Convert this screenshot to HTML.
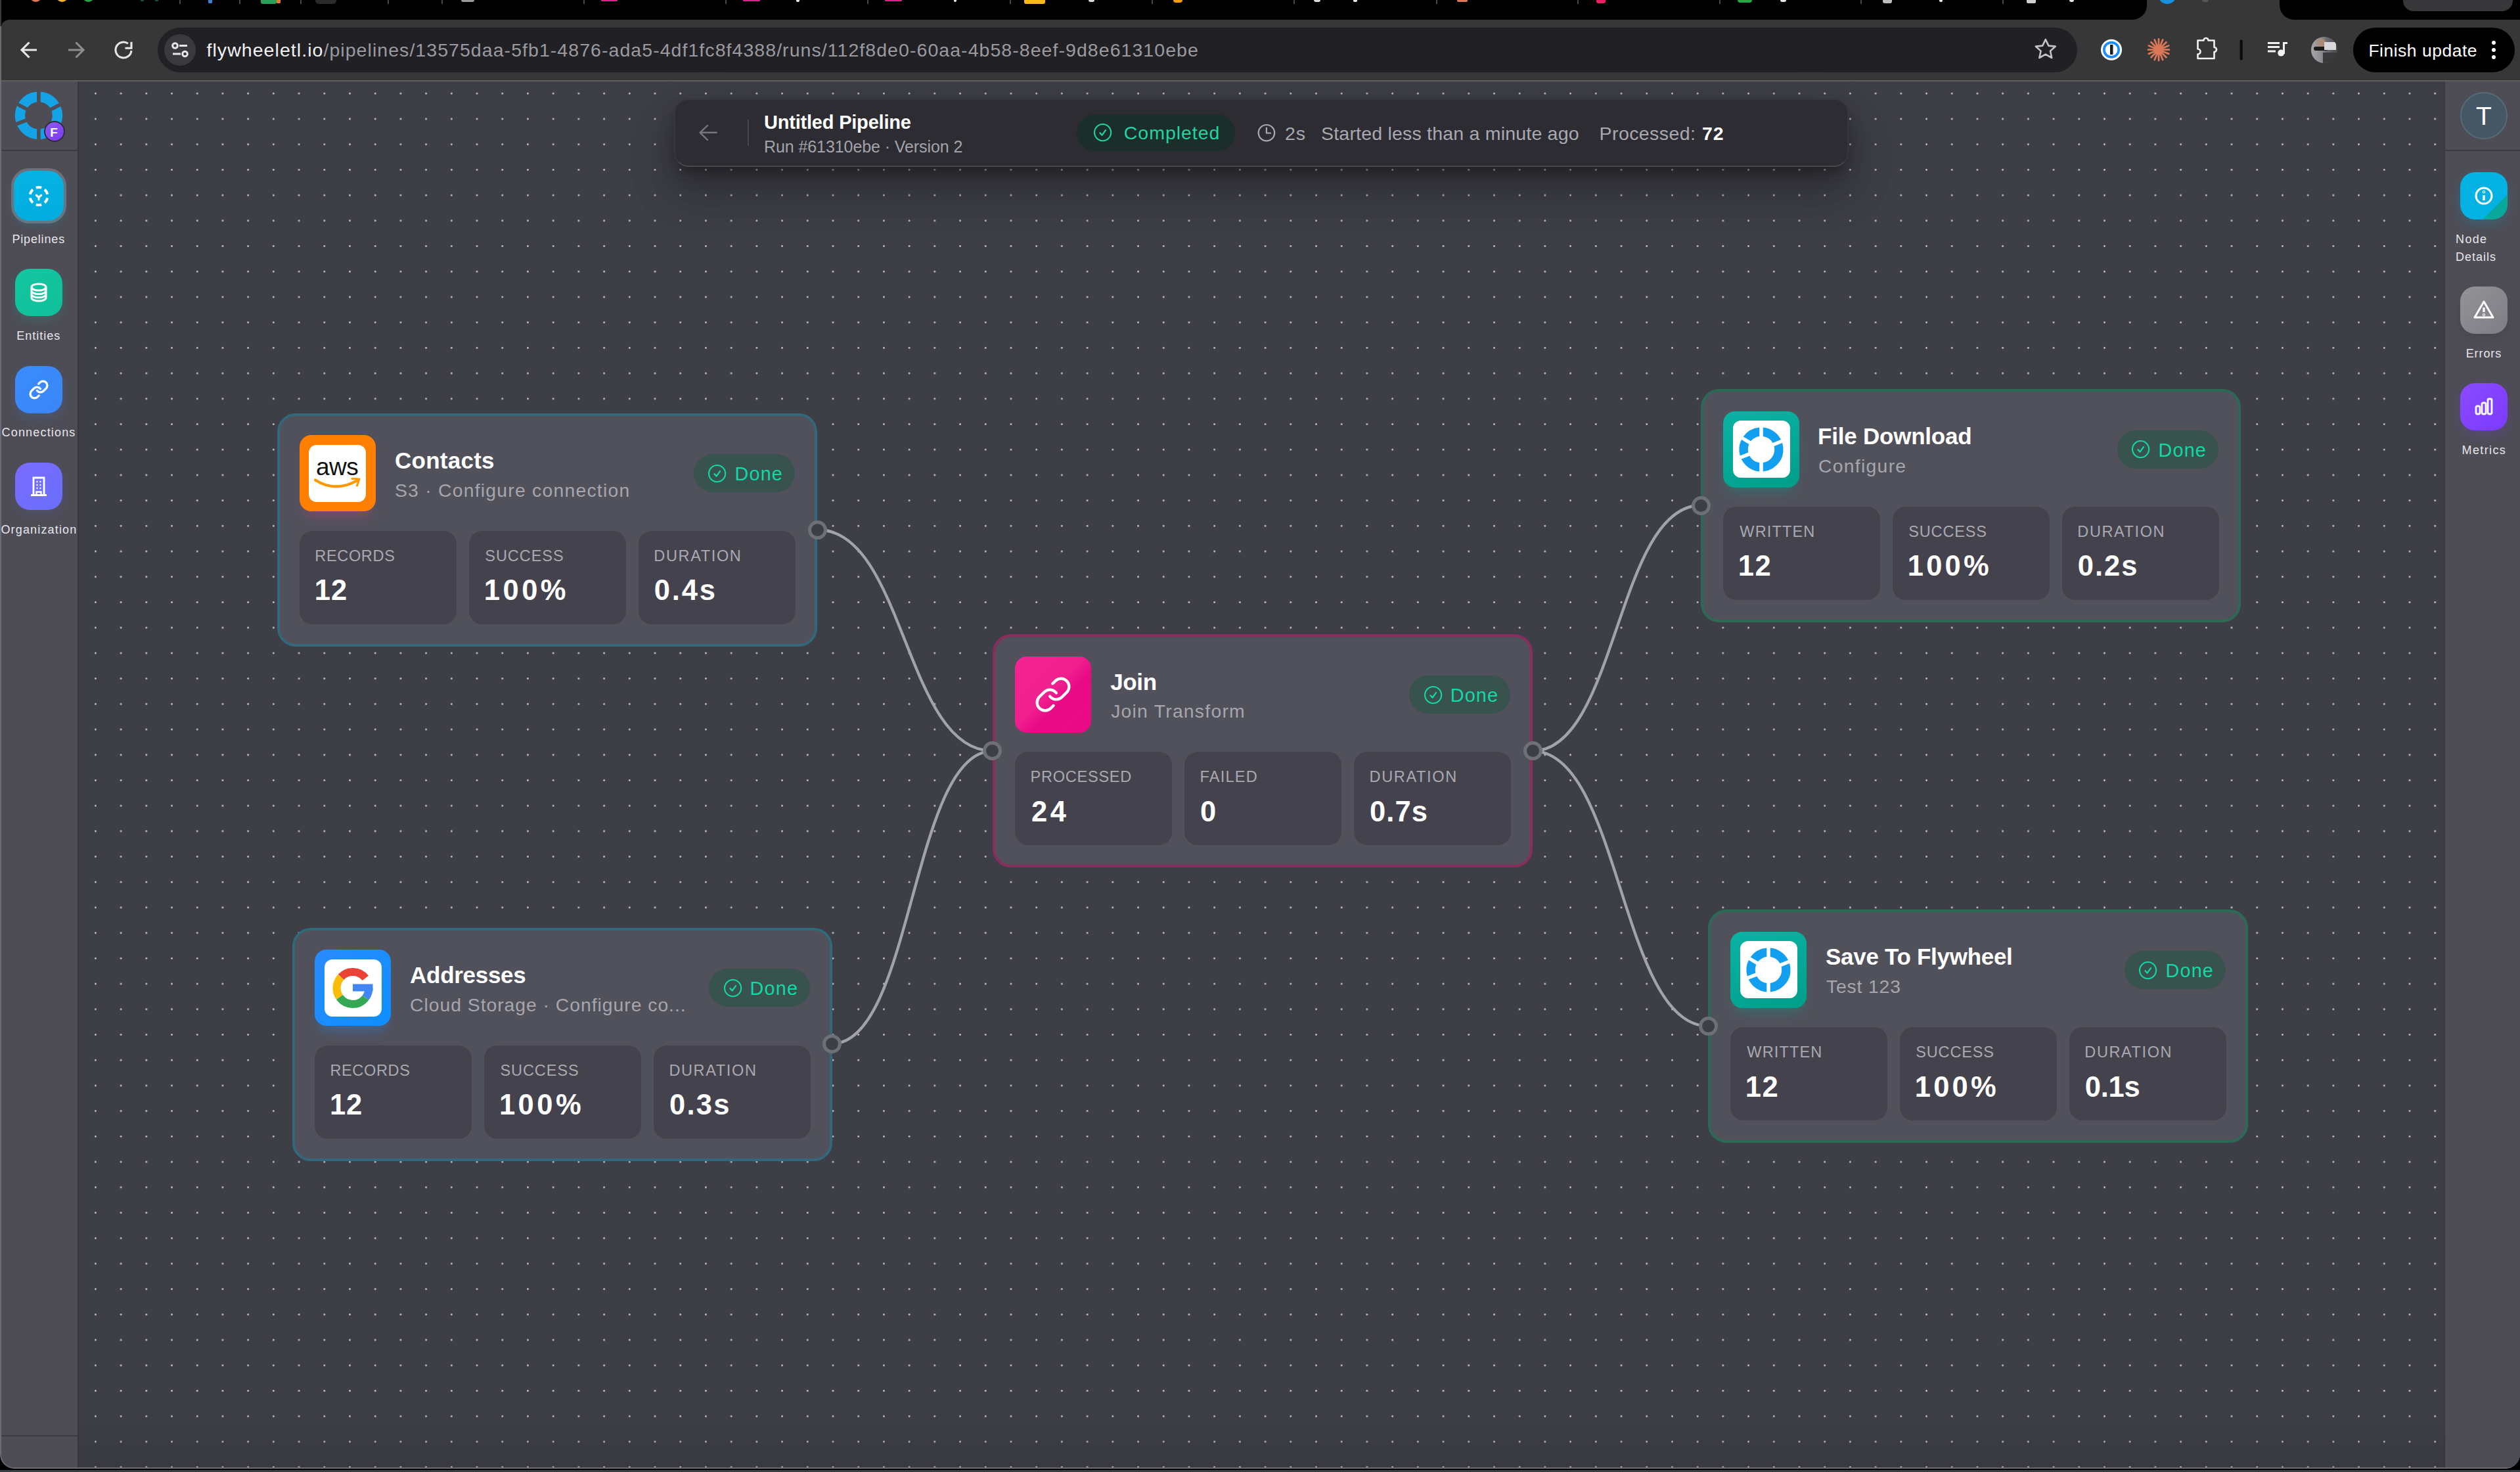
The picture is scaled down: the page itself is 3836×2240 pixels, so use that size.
<!DOCTYPE html><html><head><meta charset="utf-8"><style>
html,body{margin:0;padding:0;}
body{width:3836px;height:2240px;overflow:hidden;background:#000;position:relative;font-family:"Liberation Sans", sans-serif;}
.a{position:absolute;}
.t{position:absolute;white-space:nowrap;font-family:"Liberation Sans", sans-serif;}
</style></head><body>
<div class="a" style="left:0px;top:38px;width:3836px;height:2197px;background:#6c6c72;border-radius:0 0 22px 22px"></div>
<div class="a" style="left:0px;top:0px;width:2px;height:40px;background:#3a3a3c"></div>
<div class="a" style="left:2px;top:0px;width:3834px;height:60px;background:#000"></div>
<div class="a" style="left:46px;top:-14px;width:17px;height:17px;background:#e0795a;border-radius:50%"></div>
<div class="a" style="left:86px;top:-14px;width:17px;height:17px;background:#f5b52e;border-radius:50%"></div>
<div class="a" style="left:126px;top:-14px;width:17px;height:17px;background:#27a644;border-radius:50%"></div>
<div class="a" style="left:214px;top:0px;width:5px;height:2px;background:#1f4f35;border-radius:0 0 1px 1px"></div>
<div class="a" style="left:236px;top:0px;width:5px;height:2px;background:#1f4f35;border-radius:0 0 1px 1px"></div>
<div class="a" style="left:317px;top:0px;width:6px;height:5px;background:#3a7fd7;border-radius:0 0 1px 1px"></div>
<div class="a" style="left:397px;top:0px;width:24px;height:6px;background:#2b9f5a;border-radius:0 0 3px 3px"></div>
<div class="a" style="left:421px;top:0px;width:6px;height:5px;background:#e8782a;border-radius:0 0 1px 1px"></div>
<div class="a" style="left:480px;top:0px;width:32px;height:6px;background:#2a2a2c;border-radius:0 0 5px 5px"></div>
<div class="a" style="left:702px;top:0px;width:20px;height:3px;background:#9a9a9e;border-radius:0 0 8px 8px"></div>
<div class="a" style="left:915px;top:0px;width:25px;height:2px;background:#e0208a;border-radius:0 0 1px 1px"></div>
<div class="a" style="left:1131px;top:0px;width:26px;height:2px;background:#e0208a;border-radius:0 0 1px 1px"></div>
<div class="a" style="left:1212px;top:0px;width:5px;height:3px;background:#e8e8e8;border-radius:0 0 2px 2px"></div>
<div class="a" style="left:1347px;top:0px;width:26px;height:2px;background:#e0208a;border-radius:0 0 1px 1px"></div>
<div class="a" style="left:1452px;top:0px;width:4px;height:3px;background:#e8e8e8;border-radius:0 0 2px 2px"></div>
<div class="a" style="left:1559px;top:0px;width:32px;height:6px;background:#fbb917;border-radius:0 0 3px 3px"></div>
<div class="a" style="left:1657px;top:0px;width:9px;height:3px;background:#dcdcdc;border-radius:0 0 4px 4px"></div>
<div class="a" style="left:1786px;top:0px;width:14px;height:4px;background:#f39c12;border-radius:0 0 7px 7px"></div>
<div class="a" style="left:2000px;top:0px;width:10px;height:3px;background:#dcdcdc;border-radius:0 0 4px 4px"></div>
<div class="a" style="left:2060px;top:0px;width:6px;height:3px;background:#e8e8e8;border-radius:0 0 2px 2px"></div>
<div class="a" style="left:2218px;top:0px;width:16px;height:3px;background:#d97757;border-radius:0 0 2px 2px"></div>
<div class="a" style="left:2430px;top:0px;width:14px;height:5px;background:#e91e63;border-radius:0 0 3px 3px"></div>
<div class="a" style="left:2645px;top:0px;width:22px;height:4px;background:#27a644;border-radius:0 0 10px 10px"></div>
<div class="a" style="left:2710px;top:0px;width:9px;height:3px;background:#e8e8e8;border-radius:0 0 4px 4px"></div>
<div class="a" style="left:2866px;top:0px;width:14px;height:5px;background:#bdbdbd;border-radius:0 0 3px 3px"></div>
<div class="a" style="left:2952px;top:0px;width:5px;height:3px;background:#e8e8e8;border-radius:0 0 2px 2px"></div>
<div class="a" style="left:3085px;top:0px;width:14px;height:5px;background:#cfcfcf;border-radius:0 0 2px 2px"></div>
<div class="a" style="left:3150px;top:0px;width:7px;height:3px;background:#e8e8e8;border-radius:0 0 3px 3px"></div>
<div class="a" style="left:273px;top:0px;width:2px;height:6px;background:#4a4a4a"></div>
<div class="a" style="left:364px;top:0px;width:2px;height:6px;background:#4a4a4a"></div>
<div class="a" style="left:456.5px;top:0px;width:2px;height:6px;background:#4a4a4a"></div>
<div class="a" style="left:589.5px;top:0px;width:2px;height:6px;background:#4a4a4a"></div>
<div class="a" style="left:672.4px;top:0px;width:2px;height:6px;background:#4a4a4a"></div>
<div class="a" style="left:888px;top:0px;width:2px;height:6px;background:#4a4a4a"></div>
<div class="a" style="left:1104px;top:0px;width:2px;height:6px;background:#4a4a4a"></div>
<div class="a" style="left:1320px;top:0px;width:2px;height:6px;background:#4a4a4a"></div>
<div class="a" style="left:1537px;top:0px;width:2px;height:6px;background:#4a4a4a"></div>
<div class="a" style="left:1753px;top:0px;width:2px;height:6px;background:#4a4a4a"></div>
<div class="a" style="left:1969px;top:0px;width:2px;height:6px;background:#4a4a4a"></div>
<div class="a" style="left:2185.5px;top:0px;width:2px;height:6px;background:#4a4a4a"></div>
<div class="a" style="left:2401px;top:0px;width:2px;height:6px;background:#4a4a4a"></div>
<div class="a" style="left:2617px;top:0px;width:2px;height:6px;background:#4a4a4a"></div>
<div class="a" style="left:2832px;top:0px;width:2px;height:6px;background:#4a4a4a"></div>
<div class="a" style="left:3047.6px;top:0px;width:2px;height:6px;background:#4a4a4a"></div>
<div class="a" style="left:3240px;top:0px;width:260px;height:32px;background:#373737"></div>
<div class="a" style="left:3200px;top:0px;width:68px;height:30px;background:#000;border-radius:0 0 22px 0"></div>
<div class="a" style="left:3470px;top:0px;width:366px;height:30px;background:#000;border-radius:0 0 0 22px"></div>
<div class="a" style="left:3285px;top:-22px;width:28px;height:28px;background:#1a8fe0;border-radius:50%"></div>
<div class="a" style="left:3352px;top:0px;width:10px;height:3px;background:#555;border-radius:0 0 3px 3px"></div>
<div class="a" style="left:3658px;top:0px;width:167px;height:17px;background:#373739;border-radius:0 0 16px 16px"></div>
<div class="a" style="left:2px;top:29.5px;width:3834px;height:92.5px;background:#373737;border-radius:12px 0 0 0"></div>
<div class="a" style="left:2px;top:122px;width:3834px;height:2px;background:#5d5d63"></div>
<div class="a" style="left:240px;top:42px;width:2922px;height:68px;background:#212125;border-radius:34px"></div>
<div class="a" style="left:250px;top:52px;width:48px;height:48px;background:#3a3a3e;border-radius:50%"></div>
<svg class="a" style="left:0;top:30px" width="240" height="92" viewBox="0 30 240 92">
<g fill="none" stroke="#e8e8ea" stroke-width="3.1" stroke-linecap="butt" stroke-linejoin="miter">
<path d="M33 76 H56 M44.5 64.5 L33 76 L44.5 87.5"/>
</g>
<g fill="none" stroke="#8d8d8f" stroke-width="3.1" stroke-linecap="butt">
<path d="M104 76 H127 M115.5 64.5 L127 76 L115.5 87.5"/>
</g>
<g fill="none" stroke="#e8e8ea" stroke-width="3.1">
<path d="M199.95 77.05 A12 12 0 1 1 194.9 66.2"/>
<path d="M190.5 73.3 H200 V63.8"/>
</g>
</svg>
<svg class="a" style="left:250px;top:52px" width="48" height="48" viewBox="250 52 48 48">
<g fill="none" stroke="#e8e8ea" stroke-width="3">
<circle cx="266.5" cy="69.5" r="3.8"/><path d="M273 69.5 H285"/>
<circle cx="281.5" cy="82" r="3.8"/><path d="M263 82 H275"/>
</g></svg>
<div id="t0" class="t" style="left:314.5px;top:62.4px;font-size:28.5px;line-height:28.5px;color:#f2f2f4;font-weight:400;letter-spacing:1.054px;">flywheeletl.io<span style="color:#9a9aa0">/pipelines/13575daa-5fb1-4876-ada5-4df1fc8f4388/runs/112f8de0-60aa-4b58-8eef-9d8e61310ebe</span></div>
<svg class="a" style="left:3080px;top:40px" width="420" height="72" viewBox="3080 40 420 72">
<path d="M3113.8 60 L3118.4 69.6 L3128.8 70.6 L3121 77.6 L3123.2 88 L3113.8 82.6 L3104.4 88 L3106.6 77.6 L3098.8 70.6 L3109.2 69.6 Z" fill="none" stroke="#c4c4c8" stroke-width="2.6" stroke-linejoin="round"/>
<circle cx="3214" cy="75.7" r="16" fill="#fff"/><circle cx="3214" cy="75.7" r="13" fill="#1a8cff"/><circle cx="3214" cy="75.7" r="9.3" fill="#fff"/>
<rect x="3212" y="68" width="4.5" height="15" fill="#1c1c1c"/>
<g stroke="#d97757" stroke-width="2.8" stroke-linecap="round">
<path d="M3286 59.5 V92 M3270 75.7 H3302 M3274.5 64.2 L3297.5 87.2 M3274.5 87.2 L3297.5 64.2 M3279.8 60.5 L3292.2 91 M3292.2 60.5 L3279.8 91 M3270.8 69.5 L3301.2 81.9 M3270.8 81.9 L3301.2 69.5"/>
</g>
<circle cx="3286" cy="75.7" r="4" fill="#d97757"/>
<path d="M3345.5 68 V61.5 H3354.5 A3.5 3.5 0 0 1 3361.5 61.5 H3370.5 V72 A3.5 3.5 0 0 1 3370.5 79 V89 H3345.5 V82.5 A4 4 0 0 0 3345.5 74.5 Z" fill="none" stroke="#f2f2f2" stroke-width="2.6" stroke-linejoin="round"/>
<rect x="3409.6" y="60.6" width="4.2" height="31" rx="2.1" fill="#0b0b0b"/>
<g fill="#f2f2f2"><rect x="3452" y="64" width="18" height="3"/><rect x="3452" y="70" width="18" height="3"/><rect x="3452" y="76.5" width="12" height="3"/>
<rect x="3475" y="64" width="3" height="18"/><rect x="3475" y="64" width="7" height="3"/><circle cx="3472.2" cy="80.6" r="5"/></g>
</svg>
<div class="a" style="left:3518px;top:55.7px;width:40px;height:40px;border-radius:50%;overflow:hidden;background:linear-gradient(90deg,#a8a8ac 0%,#8c8c90 40%,#6a6a6e 60%,#4a4a4e 100%)">
<div class="a" style="left:8px;top:3px;width:14px;height:12px;background:#b98a70;border-radius:6px;opacity:.7"></div>
<div class="a" style="left:4px;top:15px;width:22px;height:6px;background:#1b1b1b;border-radius:3px"></div>
<div class="a" style="left:20px;top:8px;width:18px;height:12px;background:#d8d8da"></div>
<div class="a" style="left:18px;top:24px;width:22px;height:16px;background:#3a3a3c"></div>
</div>
<div class="a" style="left:3582px;top:42px;width:246px;height:68px;background:#000;border-radius:34px"></div>
<div id="t1" class="t" style="left:3605.4px;top:63.9px;font-size:26.5px;line-height:26.5px;color:#ffffff;font-weight:400;letter-spacing:0.500px;">Finish update</div>
<div class="a" style="left:3792.7px;top:61.60000000000001px;width:6.6px;height:6.6px;border-radius:50%;background:#fff"></div>
<div class="a" style="left:3792.7px;top:72.7px;width:6.6px;height:6.6px;border-radius:50%;background:#fff"></div>
<div class="a" style="left:3792.7px;top:83.8px;width:6.6px;height:6.6px;border-radius:50%;background:#fff"></div>
<div class="a" style="left:2px;top:124px;width:3834px;height:2109px;background:#3e3e47;border-radius:0 0 20px 20px;overflow:hidden"></div>
<svg class="a" style="left:118px;top:124px" width="3604" height="2109" viewBox="118 124 3604 2109">
<defs><pattern id="dots" patternUnits="userSpaceOnUse" x="126.045" y="122.94500000000001" width="38.71" height="38.71">
<circle cx="19.355" cy="19.355" r="1.4" fill="#c6c6cc"/></pattern></defs>
<rect x="118" y="124" width="3604" height="2109" fill="url(#dots)"/></svg>
<div class="a" style="left:2px;top:124px;width:116px;height:2109px;background:#4e4d56;border-radius:0 0 0 20px"></div>
<div class="a" style="left:118px;top:124px;width:2px;height:2109px;background:#37363f"></div>
<div class="a" style="left:2px;top:228px;width:116px;height:2px;background:#3c3b43"></div>
<div class="a" style="left:2px;top:2184px;width:116px;height:2px;background:#3c3b43"></div>
<div class="a" style="left:3722px;top:124px;width:114px;height:2109px;background:#4e4d56;border-radius:0 0 20px 0"></div>
<div class="a" style="left:3720px;top:124px;width:2px;height:2109px;background:#3a3a42"></div>
<div class="a" style="left:3722px;top:228px;width:114px;height:2px;background:#3c3b43"></div>
<svg class="a" style="left:19px;top:136px" width="80" height="80" viewBox="19 136 80 80">
<path d="M61.70 139.71 A36.2 36.2 0 0 1 89.79 156.92 L76.00 163.96 A20.8 20.8 0 0 0 61.69 155.19 Z M92.33 161.91 A36.2 36.2 0 0 1 61.70 211.89 L61.69 196.41 A20.8 20.8 0 0 0 78.53 168.93 Z M56.10 211.89 A36.2 36.2 0 0 1 26.21 191.35 L40.66 185.79 A20.8 20.8 0 0 0 56.11 196.41 Z M24.20 186.12 A36.2 36.2 0 0 1 25.72 161.33 L39.39 168.59 A20.8 20.8 0 0 0 38.66 180.58 Z M28.35 156.39 A36.2 36.2 0 0 1 56.10 139.71 L56.11 155.19 A20.8 20.8 0 0 0 42.01 163.66 Z" fill="#13a3e6"/>
</svg>
<div class="a" style="left:67px;top:184px;width:28px;height:28px;border-radius:50%;background:linear-gradient(135deg,#8b5cf6,#7c3aed);border:2px solid #2e2d35"></div>
<div id="t2" class="t" style="left:76.3px;top:191.6px;font-size:19px;line-height:19px;color:#ffffff;font-weight:700;letter-spacing:0.000px;">F</div>
<div class="a" style="left:17px;top:255.5px;width:84px;height:84px;background:#707079;border-radius:27px"></div>
<div class="a" style="left:21px;top:259.5px;width:76px;height:76px;border-radius:23.6px;background:linear-gradient(180deg,#05b3e3,#02acdf);box-shadow:0 6px 14px rgba(0,180,220,0.18)"></div><svg class="a" style="left:21px;top:259.5px" width="76" height="76" viewBox="0 0 76 76"><g transform="translate(38,38.5)" fill="none" stroke="#fff" stroke-width="4" stroke-linecap="butt"><path d="M-4.17 -12.84 A13.5 13.5 0 0 1 4.17 -12.84 M9.03 -10.03 A13.5 13.5 0 0 1 13.20 -2.81 M13.20 2.81 A13.5 13.5 0 0 1 9.03 10.03 M4.17 12.84 A13.5 13.5 0 0 1 -4.17 12.84 M-9.03 10.03 A13.5 13.5 0 0 1 -13.20 2.81 M-13.20 -2.81 A13.5 13.5 0 0 1 -9.03 -10.03"/><path d="M-3.8 -1.5 L0 1.8 L3.8 -1.5 M0 1.8 V5.5" stroke-width="3" stroke-linecap="round"/></g></svg>
<div class="a" style="left:23.3px;top:409px;width:72px;height:72px;border-radius:22.3px;background:linear-gradient(135deg,#14c7a1,#0fbf9a);box-shadow:0 8px 16px rgba(20,190,160,0.15)"></div><svg class="a" style="left:23.3px;top:409px" width="72" height="72" viewBox="0 0 72 72"><g transform="translate(36,36)" fill="none" stroke="#fff" stroke-width="3"><ellipse cx="0" cy="-8" rx="11" ry="5"/><path d="M-11 -8 V8 A11 5 0 0 0 11 8 V-8 M-11 -2.5 A11 5 0 0 0 11 -2.5 M-11 2.8 A11 5 0 0 0 11 2.8"/></g></svg>
<div class="a" style="left:23.3px;top:556.5px;width:72px;height:72px;border-radius:22.3px;background:linear-gradient(135deg,#3b8cff,#3a86f7);box-shadow:0 8px 16px rgba(60,140,255,0.15)"></div><svg class="a" style="left:23.3px;top:556.5px" width="72" height="72" viewBox="0 0 72 72"><g transform="translate(36,36) scale(1.3) translate(-12,-12)" fill="none" stroke="#fff" stroke-width="2.5" stroke-linecap="round" stroke-linejoin="round">
<path d="M10 13a5 5 0 0 0 7.54.54l3-3a5 5 0 0 0-7.07-7.07l-1.72 1.71"/><path d="M14 11a5 5 0 0 0-7.54-.54l-3 3a5 5 0 0 0 7.07 7.07l1.71-1.71"/></g></svg>
<div class="a" style="left:23.3px;top:703.8px;width:72px;height:72px;border-radius:22.3px;background:linear-gradient(135deg,#7a6cff,#6a6ffb);box-shadow:0 8px 16px rgba(110,110,255,0.12)"></div><svg class="a" style="left:23.3px;top:703.8px" width="72" height="72" viewBox="0 0 72 72"><g transform="translate(36,36)" fill="none" stroke="#fff" stroke-width="2.8"><path d="M-8 13.5 V-13 H8 V13.5 M-12 13.5 H12"/><path d="M-3.5 -7 H-1.5 M1.5 -7 H3.5 M-3.5 -2 H-1.5 M1.5 -2 H3.5 M-3.5 3 H-1.5 M1.5 3 H3.5" stroke-width="2.4"/><path d="M-3.5 13.5 V8.5 H3.5 V13.5" stroke-width="2.4"/></g></svg>
<div id="t3" class="t" style="left:18.4px;top:355.2px;font-size:18px;line-height:18px;color:#e6e6ea;font-weight:400;letter-spacing:0.838px;">Pipelines</div>
<div id="t4" class="t" style="left:25.3px;top:502.0px;font-size:18px;line-height:18px;color:#e6e6ea;font-weight:400;letter-spacing:1.000px;">Entities</div>
<div id="t5" class="t" style="left:2.6px;top:649.3px;font-size:18px;line-height:18px;color:#e6e6ea;font-weight:400;letter-spacing:1.170px;">Connections</div>
<div id="t6" class="t" style="left:1.4px;top:797.4px;font-size:18px;line-height:18px;color:#e6e6ea;font-weight:400;letter-spacing:1.164px;">Organization</div>
<div class="a" style="left:3745.1px;top:140.0px;width:71.6px;height:71.6px;border-radius:50%;background:#455664;box-shadow:inset 0 0 0 2px #566a78"></div>
<div id="t7" class="t" style="left:3769.0px;top:157.4px;font-size:39px;line-height:39px;color:#ffffff;font-weight:400;letter-spacing:0.000px;">T</div>
<div class="a" style="left:3745px;top:262px;width:72px;height:72px;border-radius:22.3px;background:linear-gradient(135deg,#03b1e2 0%,#03b1e2 74%,#0aa89a 74%,#0aa89a 100%);box-shadow:0 8px 18px rgba(0,170,220,0.2)"></div><svg class="a" style="left:3745px;top:262px" width="72" height="72" viewBox="0 0 72 72"><g transform="translate(36,36)" fill="none" stroke="#fff" stroke-width="3"><circle r="12"/><path d="M0 -1 V7" stroke-width="3.4"/><circle cx="0" cy="-6" r="0.6" stroke-width="3.4"/></g></svg>
<div class="a" style="left:3745px;top:436px;width:72px;height:72px;border-radius:22.3px;background:linear-gradient(135deg,#939398,#7d7d84);box-shadow:0 8px 16px rgba(0,0,0,0.08)"></div><svg class="a" style="left:3745px;top:436px" width="72" height="72" viewBox="0 0 72 72"><g transform="translate(36,36)" fill="none" stroke="#fff" stroke-width="3" stroke-linejoin="round"><path d="M0 -13 L14 11 H-14 Z"/><path d="M0 -4 V3" stroke-width="3.2"/><circle cx="0" cy="7" r="0.5" stroke-width="3.2"/></g></svg>
<div class="a" style="left:3745px;top:583px;width:72px;height:72px;border-radius:22.3px;background:linear-gradient(135deg,#8a4bff,#7c3aff);box-shadow:0 8px 18px rgba(130,60,255,0.18)"></div><svg class="a" style="left:3745px;top:583px" width="72" height="72" viewBox="0 0 72 72"><g transform="translate(36,36)" fill="none" stroke="#fff" stroke-width="2.8"><rect x="-12" y="-1" width="6" height="12" rx="2"/><rect x="-3" y="-6" width="6" height="17" rx="2"/><rect x="6" y="-12" width="6" height="23" rx="2"/></g></svg>
<div id="t8" class="t" style="left:3738.1px;top:355.0px;font-size:18px;line-height:18px;color:#e6e6ea;font-weight:400;letter-spacing:1.333px;">Node</div>
<div id="t9" class="t" style="left:3738.1px;top:381.8px;font-size:18px;line-height:18px;color:#e6e6ea;font-weight:400;letter-spacing:1.000px;">Details</div>
<div id="t10" class="t" style="left:3753.7px;top:528.9px;font-size:18px;line-height:18px;color:#e6e6ea;font-weight:400;letter-spacing:0.920px;">Errors</div>
<div id="t11" class="t" style="left:3747.6px;top:675.9px;font-size:18px;line-height:18px;color:#e6e6ea;font-weight:400;letter-spacing:1.367px;">Metrics</div>
<svg class="a" style="left:0;top:0" width="3836" height="2240" viewBox="0 0 3836 2240">
<g fill="none" stroke="#a2a2ab" stroke-width="4.3">
<path d="M1244.2 806 C1377.45 806 1377.45 1142.8 1510.7 1142.8"/><path d="M1266.7 1588.3 C1388.7 1588.3 1388.7 1142.8 1510.7 1142.8"/><path d="M2333 1142.8 C2461.0 1142.8 2461.0 769 2589 769"/><path d="M2333 1142.8 C2466.5 1142.8 2466.5 1561.5 2600 1561.5"/>
</g></svg>
<div class="a" style="left:1026px;top:149.7px;width:1787.6px;height:104.6px;background:#2c2c32;border:2px solid #36363d;border-bottom-color:#48484f;box-sizing:border-box;border-radius:22px;box-shadow:0 14px 24px -6px rgba(0,0,0,0.35), 0 30px 70px 0px rgba(0,0,0,0.22), 0 40px 60px 20px rgba(0,0,0,0.07)"></div>
<svg class="a" style="left:1060px;top:185px" width="40" height="34" viewBox="1060 185 40 34">
<path d="M1065.5 201.8 H1090.8 M1077 191 L1065.5 201.8 L1077 212.8" fill="none" stroke="#76767e" stroke-width="2.4" stroke-linecap="round" stroke-linejoin="round"/></svg>
<div class="a" style="left:1137.9px;top:182px;width:2px;height:40px;background:#45454c"></div>
<div id="t12" class="t" style="left:1163.0px;top:172.1px;font-size:29px;line-height:29px;color:#ffffff;font-weight:700;letter-spacing:-0.206px;">Untitled Pipeline</div>
<div id="t13" class="t" style="left:1163.0px;top:210.6px;font-size:25px;line-height:25px;color:#a3a3ab;font-weight:400;letter-spacing:-0.083px;">Run #61310ebe · Version 2</div>
<div class="a" style="left:1639px;top:174px;width:240.6px;height:56px;background:#1b2e2a;border-radius:28px"></div>
<svg class="a" style="left:1663.0px;top:186.4px" width="31.2" height="31.2" viewBox="-15.6 -15.6 31.2 31.2"><circle cx="0" cy="0" r="12.6" fill="none" stroke="#22d2a2" stroke-width="2.1"/><path d="M-4.16 0.63 L-1.01 4.03 L4.41 -3.53" fill="none" stroke="#22d2a2" stroke-width="2.3" stroke-linecap="round" stroke-linejoin="round"/></svg>
<div id="t14" class="t" style="left:1710.8px;top:188.4px;font-size:28.5px;line-height:28.5px;color:#22d4a3;font-weight:400;letter-spacing:0.975px;">Completed</div>
<svg class="a" style="left:1910px;top:185px" width="36" height="36" viewBox="1910 185 36 36">
<g fill="none" stroke="#a9a9b1" stroke-width="2.2" stroke-linecap="round"><circle cx="1927.9" cy="202.2" r="12.2"/><path d="M1927.9 194.5 V202.5 H1934"/></g></svg>
<div id="t15" class="t" style="left:1956.0px;top:188.7px;font-size:28.5px;line-height:28.5px;color:#a9a9b1;font-weight:400;letter-spacing:1.000px;">2s</div>
<div id="t16" class="t" style="left:2011.0px;top:188.7px;font-size:28.5px;line-height:28.5px;color:#a9a9b1;font-weight:400;letter-spacing:0.207px;">Started less than a minute ago</div>
<div id="t17" class="t" style="left:2434.6px;top:188.7px;font-size:28.5px;line-height:28.5px;color:#a9a9b1;font-weight:400;letter-spacing:0.411px;">Processed:</div>
<div id="t18" class="t" style="left:2591.0px;top:188.7px;font-size:28.5px;line-height:28.5px;color:#ffffff;font-weight:700;letter-spacing:1.000px;">72</div>
<div class="a" style="left:422px;top:628.6px;width:822px;height:355px;background:#51515b;border:4px solid #33677a;box-sizing:border-box;border-radius:28px"></div><div class="a" style="left:456px;top:662.1px;width:116px;height:116px;border-radius:18px;background:#ff8000;box-shadow:0 14px 18px -8px rgba(190,70,130,0.45)"></div><div class="a" style="left:470px;top:676.6px;width:87px;height:87px;border-radius:12px;background:#fff"></div><div class="t" style="left:481px;top:692.1px;font-size:37px;line-height:37px;color:#111;font-weight:400;letter-spacing:-0.5px">aws</div><svg class="a" style="left:456px;top:662.1px" width="116" height="116" viewBox="0 0 116 116"><path d="M24 68.5 Q55 88 88 69" fill="none" stroke="#ff9900" stroke-width="4.2" stroke-linecap="round"/><path d="M80 66.5 L91 67 L87.5 77" fill="none" stroke="#ff9900" stroke-width="3.2" stroke-linecap="round" stroke-linejoin="round"/></svg><div id="t19" class="t" style="left:601.0px;top:682.7px;font-size:35px;line-height:35px;color:#ffffff;font-weight:700;letter-spacing:0.257px;">Contacts</div><div id="t20" class="t" style="left:601.0px;top:731.6px;font-size:28.3px;line-height:28.3px;color:#a6a6ae;font-weight:400;letter-spacing:1.250px;">S3 · Configure connection</div><div class="a" style="left:1056px;top:691.4px;width:154px;height:58px;background:#38524d;border-radius:29px"></div><svg class="a" style="left:1076.4px;top:704.8px" width="31.2" height="31.2" viewBox="-15.6 -15.6 31.2 31.2"><circle cx="0" cy="0" r="12.6" fill="none" stroke="#12d8a7" stroke-width="2.1"/><path d="M-4.16 0.63 L-1.01 4.03 L4.41 -3.53" fill="none" stroke="#12d8a7" stroke-width="2.3" stroke-linecap="round" stroke-linejoin="round"/></svg><div id="t21" class="t" style="left:1118.5px;top:707.2px;font-size:28.8px;line-height:28.8px;color:#12d8a7;font-weight:400;letter-spacing:1.167px;">Done</div><div class="a" style="left:456px;top:807.6px;width:239px;height:142px;background:#44434d;border-radius:20px"></div><div id="t22" class="t" style="left:479.3px;top:834.5px;font-size:23.5px;line-height:23.5px;color:#a9a9b2;font-weight:400;letter-spacing:0.667px;">RECORDS</div><div id="t23" class="t" style="left:478.8px;top:876.8px;font-size:43.5px;line-height:43.5px;color:#ffffff;font-weight:700;letter-spacing:1.000px;">12</div><div class="a" style="left:714px;top:807.6px;width:239px;height:142px;background:#44434d;border-radius:20px"></div><div id="t24" class="t" style="left:738.3px;top:834.5px;font-size:23.5px;line-height:23.5px;color:#a9a9b2;font-weight:400;letter-spacing:0.950px;">SUCCESS</div><div id="t25" class="t" style="left:736.8px;top:876.8px;font-size:43.5px;line-height:43.5px;color:#ffffff;font-weight:700;letter-spacing:4.500px;">100%</div><div class="a" style="left:972px;top:807.6px;width:239px;height:142px;background:#44434d;border-radius:20px"></div><div id="t26" class="t" style="left:995.3px;top:834.5px;font-size:23.5px;line-height:23.5px;color:#a9a9b2;font-weight:400;letter-spacing:1.643px;">DURATION</div><div id="t27" class="t" style="left:995.8px;top:876.8px;font-size:43.5px;line-height:43.5px;color:#ffffff;font-weight:700;letter-spacing:2.800px;">0.4s</div>
<div class="a" style="left:445.1px;top:1411.6px;width:822px;height:355px;background:#51515b;border:4px solid #33677a;box-sizing:border-box;border-radius:28px"></div><div class="a" style="left:479.1px;top:1445.1px;width:116px;height:116px;border-radius:18px;background:linear-gradient(135deg,#2a8bff,#0d8fff);box-shadow:0 14px 18px -8px rgba(30,140,255,0.4)"></div><div class="a" style="left:493.6px;top:1459.6px;width:87px;height:87px;border-radius:12px;background:#fff"></div><svg class="a" style="left:479.1px;top:1445.1px" width="116" height="116" viewBox="0 0 116 116"><path d="M40.08 41.79 A24.5 24.5 0 0 1 77.31 43.42" fill="none" stroke="#ea4335" stroke-width="12"/><path d="M37.93 72.55 A24.5 24.5 0 0 1 40.08 41.79" fill="none" stroke="#fbbc05" stroke-width="12"/><path d="M77.57 73.24 A24.5 24.5 0 0 1 37.93 72.55" fill="none" stroke="#34a853" stroke-width="12"/><path d="M82.50 58.50 A24.5 24.5 0 0 1 77.57 73.24" fill="none" stroke="#4285f4" stroke-width="12"/><rect x="58" y="52.5" width="30.5" height="11" fill="#4285f4"/></svg><div id="t28" class="t" style="left:624.1px;top:1465.7px;font-size:35px;line-height:35px;color:#ffffff;font-weight:700;letter-spacing:-0.300px;">Addresses</div><div id="t29" class="t" style="left:624.1px;top:1514.6px;font-size:28.3px;line-height:28.3px;color:#a6a6ae;font-weight:400;letter-spacing:0.983px;">Cloud Storage · Configure co...</div><div class="a" style="left:1079.1px;top:1474.3999999999999px;width:154px;height:58px;background:#38524d;border-radius:29px"></div><svg class="a" style="left:1099.5px;top:1487.8px" width="31.2" height="31.2" viewBox="-15.6 -15.6 31.2 31.2"><circle cx="0" cy="0" r="12.6" fill="none" stroke="#12d8a7" stroke-width="2.1"/><path d="M-4.16 0.63 L-1.01 4.03 L4.41 -3.53" fill="none" stroke="#12d8a7" stroke-width="2.3" stroke-linecap="round" stroke-linejoin="round"/></svg><div id="t30" class="t" style="left:1141.6px;top:1490.2px;font-size:28.8px;line-height:28.8px;color:#12d8a7;font-weight:400;letter-spacing:1.167px;">Done</div><div class="a" style="left:479.1px;top:1590.6px;width:239px;height:142px;background:#44434d;border-radius:20px"></div><div id="t31" class="t" style="left:502.4px;top:1617.5px;font-size:23.5px;line-height:23.5px;color:#a9a9b2;font-weight:400;letter-spacing:0.667px;">RECORDS</div><div id="t32" class="t" style="left:501.9px;top:1659.8px;font-size:43.5px;line-height:43.5px;color:#ffffff;font-weight:700;letter-spacing:1.000px;">12</div><div class="a" style="left:737.1px;top:1590.6px;width:239px;height:142px;background:#44434d;border-radius:20px"></div><div id="t33" class="t" style="left:761.4px;top:1617.5px;font-size:23.5px;line-height:23.5px;color:#a9a9b2;font-weight:400;letter-spacing:0.950px;">SUCCESS</div><div id="t34" class="t" style="left:759.9px;top:1659.8px;font-size:43.5px;line-height:43.5px;color:#ffffff;font-weight:700;letter-spacing:4.500px;">100%</div><div class="a" style="left:995.1px;top:1590.6px;width:239px;height:142px;background:#44434d;border-radius:20px"></div><div id="t35" class="t" style="left:1018.4px;top:1617.5px;font-size:23.5px;line-height:23.5px;color:#a9a9b2;font-weight:400;letter-spacing:1.643px;">DURATION</div><div id="t36" class="t" style="left:1018.9px;top:1659.8px;font-size:43.5px;line-height:43.5px;color:#ffffff;font-weight:700;letter-spacing:2.333px;">0.3s</div>
<div class="a" style="left:1511.2px;top:965.4px;width:822px;height:355px;background:#51515b;border:4px solid #8a2d5e;box-sizing:border-box;border-radius:28px"></div><div class="a" style="left:1545.2px;top:998.9px;width:116px;height:116px;border-radius:18px;background:linear-gradient(135deg,#f42592 0%,#f0208f 45%,#e90b86 60%,#ea0a85 100%)"></div><svg class="a" style="left:1545.2px;top:998.9px" width="116" height="116" viewBox="0 0 116 116"><g transform="translate(58,58) scale(2.45) translate(-12,-12)" fill="none" stroke="#fff" stroke-width="1.75" stroke-linecap="round" stroke-linejoin="round"><path d="M10 13a5 5 0 0 0 7.54.54l3-3a5 5 0 0 0-7.07-7.07l-1.72 1.71"/><path d="M14 11a5 5 0 0 0-7.54-.54l-3 3a5 5 0 0 0 7.07 7.07l1.71-1.71"/></g></svg><div id="t37" class="t" style="left:1690.2px;top:1019.5px;font-size:35px;line-height:35px;color:#ffffff;font-weight:700;letter-spacing:-0.333px;">Join</div><div id="t38" class="t" style="left:1691.2px;top:1068.4px;font-size:28.3px;line-height:28.3px;color:#a6a6ae;font-weight:400;letter-spacing:1.254px;">Join Transform</div><div class="a" style="left:2145.2px;top:1028.2px;width:154px;height:58px;background:#38524d;border-radius:29px"></div><svg class="a" style="left:2165.6px;top:1041.6000000000001px" width="31.2" height="31.2" viewBox="-15.6 -15.6 31.2 31.2"><circle cx="0" cy="0" r="12.6" fill="none" stroke="#12d8a7" stroke-width="2.1"/><path d="M-4.16 0.63 L-1.01 4.03 L4.41 -3.53" fill="none" stroke="#12d8a7" stroke-width="2.3" stroke-linecap="round" stroke-linejoin="round"/></svg><div id="t39" class="t" style="left:2207.7px;top:1044.0px;font-size:28.8px;line-height:28.8px;color:#12d8a7;font-weight:400;letter-spacing:1.167px;">Done</div><div class="a" style="left:1545.2px;top:1144.4px;width:239px;height:142px;background:#44434d;border-radius:20px"></div><div id="t40" class="t" style="left:1568.5px;top:1171.3px;font-size:23.5px;line-height:23.5px;color:#a9a9b2;font-weight:400;letter-spacing:0.775px;">PROCESSED</div><div id="t41" class="t" style="left:1570.0px;top:1213.6px;font-size:43.5px;line-height:43.5px;color:#ffffff;font-weight:700;letter-spacing:4.500px;">24</div><div class="a" style="left:1803.2px;top:1144.4px;width:239px;height:142px;background:#44434d;border-radius:20px"></div><div id="t42" class="t" style="left:1826.5px;top:1171.3px;font-size:23.5px;line-height:23.5px;color:#a9a9b2;font-weight:400;letter-spacing:1.260px;">FAILED</div><div id="t43" class="t" style="left:1827.0px;top:1213.6px;font-size:43.5px;line-height:43.5px;color:#ffffff;font-weight:700;letter-spacing:0.000px;">0</div><div class="a" style="left:2061.2px;top:1144.4px;width:239px;height:142px;background:#44434d;border-radius:20px"></div><div id="t44" class="t" style="left:2084.5px;top:1171.3px;font-size:23.5px;line-height:23.5px;color:#a9a9b2;font-weight:400;letter-spacing:1.671px;">DURATION</div><div id="t45" class="t" style="left:2085.0px;top:1213.6px;font-size:43.5px;line-height:43.5px;color:#ffffff;font-weight:700;letter-spacing:1.100px;">0.7s</div>
<div class="a" style="left:2589px;top:592px;width:822px;height:355px;background:#51515b;border:4px solid #2c6a56;box-sizing:border-box;border-radius:28px"></div><div class="a" style="left:2623px;top:625.5px;width:116px;height:116px;border-radius:18px;background:linear-gradient(160deg,#0bb3a5,#009e8a);box-shadow:0 14px 20px -8px rgba(0,170,150,0.35)"></div><div class="a" style="left:2637.5px;top:640.0px;width:87px;height:87px;border-radius:12px;background:#fff"></div><svg class="a" style="left:2623px;top:625.5px" width="116" height="116" viewBox="0 0 116 116"><path d="M60.75 24.51 A33.6 33.6 0 0 1 88.02 42.91 L75.53 47.96 A20.2 20.2 0 0 0 60.74 37.99 Z M90.08 48.00 A33.6 33.6 0 0 1 60.75 91.49 L60.74 78.01 A20.2 20.2 0 0 0 77.58 53.04 Z M55.25 91.49 A33.6 33.6 0 0 1 27.72 72.57 L40.30 67.73 A20.2 20.2 0 0 0 55.26 78.01 Z M25.75 67.44 A33.6 33.6 0 0 1 27.88 43.11 L39.43 50.04 A20.2 20.2 0 0 0 38.33 62.61 Z M30.71 38.40 A33.6 33.6 0 0 1 55.25 24.51 L55.26 37.99 A20.2 20.2 0 0 0 42.26 45.34 Z" fill="#139ff0"/></svg><div id="t46" class="t" style="left:2767.0px;top:646.1px;font-size:35px;line-height:35px;color:#ffffff;font-weight:700;letter-spacing:-0.217px;">File Download</div><div id="t47" class="t" style="left:2768.0px;top:695.0px;font-size:28.3px;line-height:28.3px;color:#a6a6ae;font-weight:400;letter-spacing:1.300px;">Configure</div><div class="a" style="left:3223px;top:654.8px;width:154px;height:58px;background:#38524d;border-radius:29px"></div><svg class="a" style="left:3243.4px;top:668.1999999999999px" width="31.2" height="31.2" viewBox="-15.6 -15.6 31.2 31.2"><circle cx="0" cy="0" r="12.6" fill="none" stroke="#12d8a7" stroke-width="2.1"/><path d="M-4.16 0.63 L-1.01 4.03 L4.41 -3.53" fill="none" stroke="#12d8a7" stroke-width="2.3" stroke-linecap="round" stroke-linejoin="round"/></svg><div id="t48" class="t" style="left:3285.5px;top:670.6px;font-size:28.8px;line-height:28.8px;color:#12d8a7;font-weight:400;letter-spacing:1.167px;">Done</div><div class="a" style="left:2623px;top:771px;width:239px;height:142px;background:#44434d;border-radius:20px"></div><div id="t49" class="t" style="left:2648.3px;top:797.9px;font-size:23.5px;line-height:23.5px;color:#a9a9b2;font-weight:400;letter-spacing:1.167px;">WRITTEN</div><div id="t50" class="t" style="left:2645.8px;top:840.2px;font-size:43.5px;line-height:43.5px;color:#ffffff;font-weight:700;letter-spacing:1.400px;">12</div><div class="a" style="left:2881px;top:771px;width:239px;height:142px;background:#44434d;border-radius:20px"></div><div id="t51" class="t" style="left:2905.3px;top:797.9px;font-size:23.5px;line-height:23.5px;color:#a9a9b2;font-weight:400;letter-spacing:0.833px;">SUCCESS</div><div id="t52" class="t" style="left:2903.8px;top:840.2px;font-size:43.5px;line-height:43.5px;color:#ffffff;font-weight:700;letter-spacing:4.167px;">100%</div><div class="a" style="left:3139px;top:771px;width:239px;height:142px;background:#44434d;border-radius:20px"></div><div id="t53" class="t" style="left:3162.3px;top:797.9px;font-size:23.5px;line-height:23.5px;color:#a9a9b2;font-weight:400;letter-spacing:1.614px;">DURATION</div><div id="t54" class="t" style="left:3162.8px;top:840.2px;font-size:43.5px;line-height:43.5px;color:#ffffff;font-weight:700;letter-spacing:2.000px;">0.2s</div>
<div class="a" style="left:2600px;top:1384.3px;width:822px;height:355px;background:#51515b;border:4px solid #2c6a56;box-sizing:border-box;border-radius:28px"></div><div class="a" style="left:2634px;top:1417.8px;width:116px;height:116px;border-radius:18px;background:linear-gradient(160deg,#0bb3a5,#009e8a);box-shadow:0 14px 20px -8px rgba(0,170,150,0.35)"></div><div class="a" style="left:2648.5px;top:1432.3px;width:87px;height:87px;border-radius:12px;background:#fff"></div><svg class="a" style="left:2634px;top:1417.8px" width="116" height="116" viewBox="0 0 116 116"><path d="M60.75 24.51 A33.6 33.6 0 0 1 88.02 42.91 L75.53 47.96 A20.2 20.2 0 0 0 60.74 37.99 Z M90.08 48.00 A33.6 33.6 0 0 1 60.75 91.49 L60.74 78.01 A20.2 20.2 0 0 0 77.58 53.04 Z M55.25 91.49 A33.6 33.6 0 0 1 27.72 72.57 L40.30 67.73 A20.2 20.2 0 0 0 55.26 78.01 Z M25.75 67.44 A33.6 33.6 0 0 1 27.88 43.11 L39.43 50.04 A20.2 20.2 0 0 0 38.33 62.61 Z M30.71 38.40 A33.6 33.6 0 0 1 55.25 24.51 L55.26 37.99 A20.2 20.2 0 0 0 42.26 45.34 Z" fill="#139ff0"/></svg><div id="t55" class="t" style="left:2779.0px;top:1438.4px;font-size:35px;line-height:35px;color:#ffffff;font-weight:700;letter-spacing:-0.293px;">Save To Flywheel</div><div id="t56" class="t" style="left:2780.0px;top:1487.3px;font-size:28.3px;line-height:28.3px;color:#a6a6ae;font-weight:400;letter-spacing:0.843px;">Test 123</div><div class="a" style="left:3234px;top:1447.1px;width:154px;height:58px;background:#38524d;border-radius:29px"></div><svg class="a" style="left:3254.4px;top:1460.5px" width="31.2" height="31.2" viewBox="-15.6 -15.6 31.2 31.2"><circle cx="0" cy="0" r="12.6" fill="none" stroke="#12d8a7" stroke-width="2.1"/><path d="M-4.16 0.63 L-1.01 4.03 L4.41 -3.53" fill="none" stroke="#12d8a7" stroke-width="2.3" stroke-linecap="round" stroke-linejoin="round"/></svg><div id="t57" class="t" style="left:3296.5px;top:1462.9px;font-size:28.8px;line-height:28.8px;color:#12d8a7;font-weight:400;letter-spacing:1.167px;">Done</div><div class="a" style="left:2634px;top:1563.3px;width:239px;height:142px;background:#44434d;border-radius:20px"></div><div id="t58" class="t" style="left:2659.3px;top:1590.2px;font-size:23.5px;line-height:23.5px;color:#a9a9b2;font-weight:400;letter-spacing:1.167px;">WRITTEN</div><div id="t59" class="t" style="left:2656.8px;top:1632.5px;font-size:43.5px;line-height:43.5px;color:#ffffff;font-weight:700;letter-spacing:1.400px;">12</div><div class="a" style="left:2892px;top:1563.3px;width:239px;height:142px;background:#44434d;border-radius:20px"></div><div id="t60" class="t" style="left:2916.3px;top:1590.2px;font-size:23.5px;line-height:23.5px;color:#a9a9b2;font-weight:400;letter-spacing:0.833px;">SUCCESS</div><div id="t61" class="t" style="left:2914.8px;top:1632.5px;font-size:43.5px;line-height:43.5px;color:#ffffff;font-weight:700;letter-spacing:4.167px;">100%</div><div class="a" style="left:3150px;top:1563.3px;width:239px;height:142px;background:#44434d;border-radius:20px"></div><div id="t62" class="t" style="left:3173.3px;top:1590.2px;font-size:23.5px;line-height:23.5px;color:#a9a9b2;font-weight:400;letter-spacing:1.614px;">DURATION</div><div id="t63" class="t" style="left:3173.8px;top:1632.5px;font-size:43.5px;line-height:43.5px;color:#ffffff;font-weight:700;letter-spacing:-0.267px;">0.1s</div>
<div class="a" style="left:1229.7px;top:791.5px;width:29px;height:29px;border-radius:50%;background:#3e3e47;border:5px solid #6f6f77;box-sizing:border-box"></div>
<div class="a" style="left:1252.2px;top:1573.8px;width:29px;height:29px;border-radius:50%;background:#3e3e47;border:5px solid #6f6f77;box-sizing:border-box"></div>
<div class="a" style="left:1496.2px;top:1128.3px;width:29px;height:29px;border-radius:50%;background:#3e3e47;border:5px solid #6f6f77;box-sizing:border-box"></div>
<div class="a" style="left:2318.5px;top:1128.3px;width:29px;height:29px;border-radius:50%;background:#3e3e47;border:5px solid #6f6f77;box-sizing:border-box"></div>
<div class="a" style="left:2574.5px;top:754.5px;width:29px;height:29px;border-radius:50%;background:#3e3e47;border:5px solid #6f6f77;box-sizing:border-box"></div>
<div class="a" style="left:2585.5px;top:1547.0px;width:29px;height:29px;border-radius:50%;background:#3e3e47;border:5px solid #6f6f77;box-sizing:border-box"></div>
<div class="a" style="left:120px;top:2140px;width:3602px;height:93px;background:linear-gradient(180deg,rgba(0,0,0,0),rgba(0,0,0,0.09))"></div>
<div class="a" style="left:0px;top:2235px;width:3836px;height:5px;background:#000"></div>
<div class="a" style="left:0px;top:2236.5px;width:3836px;height:3.5px;background:#3a3e45"></div>
</body></html>
